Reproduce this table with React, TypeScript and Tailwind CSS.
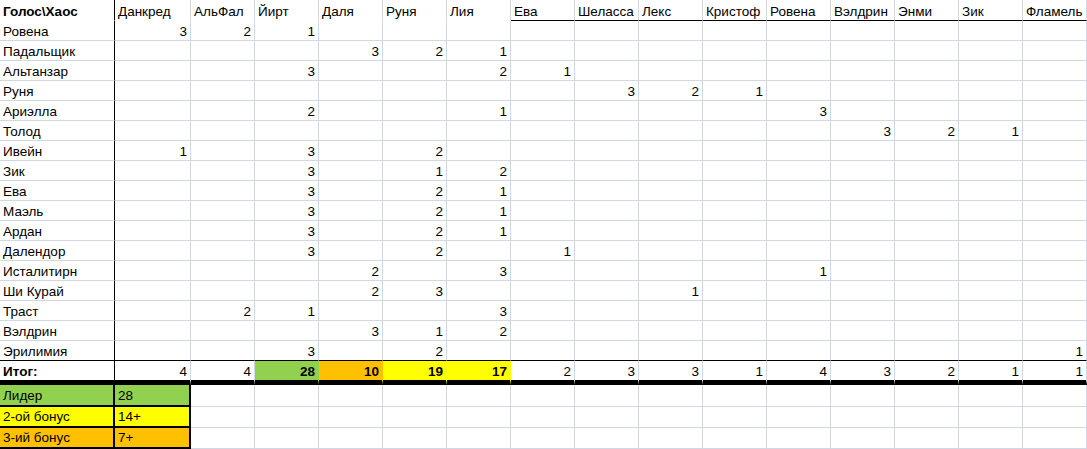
import React from "react";

const cols = [
  "Данкред",
  "АльФал",
  "Йирт",
  "Даля",
  "Руня",
  "Лия",
  "Ева",
  "Шеласса",
  "Лекс",
  "Кристоф",
  "Ровена",
  "Вэлдрин",
  "Энми",
  "Зик",
  "Фламель",
];

const rows: [string, Record<number, number>][] = [
  ["Ровена", { 0: 3, 1: 2, 2: 1 }],
  ["Падальщик", { 3: 3, 4: 2, 5: 1 }],
  ["Альтанзар", { 2: 3, 5: 2, 6: 1 }],
  ["Руня", { 7: 3, 8: 2, 9: 1 }],
  ["Ариэлла", { 2: 2, 5: 1, 10: 3 }],
  ["Толод", { 11: 3, 12: 2, 13: 1 }],
  ["Ивейн", { 0: 1, 2: 3, 4: 2 }],
  ["Зик", { 2: 3, 4: 1, 5: 2 }],
  ["Ева", { 2: 3, 4: 2, 5: 1 }],
  ["Маэль", { 2: 3, 4: 2, 5: 1 }],
  ["Ардан", { 2: 3, 4: 2, 5: 1 }],
  ["Далендор", { 2: 3, 4: 2, 6: 1 }],
  ["Исталитирн", { 3: 2, 5: 3, 10: 1 }],
  ["Ши Курай", { 3: 2, 4: 3, 8: 1 }],
  ["Траст", { 1: 2, 2: 1, 5: 3 }],
  ["Вэлдрин", { 3: 3, 4: 1, 5: 2 }],
  ["Эрилимия", { 2: 3, 4: 2, 14: 1 }],
];

const totals = [4, 4, 28, 10, 19, 17, 2, 3, 3, 1, 4, 3, 2, 1, 1];

const font = { fontFamily: '"Liberation Sans", Arial, sans-serif' };

function w(i: number) {
  return i === 0 ? "w-[76px]" : "w-[64px]";
}

function totalFill(i: number) {
  if (i === 2) return "bg-[#92d050] border-r-[#92d050] font-bold";
  if (i === 3) return "bg-[#ffc000] border-r-[#ffc000] font-bold";
  if (i === 4 || i === 5) return "bg-[#ffff00] border-r-[#ffff00] font-bold";
  return "border-r-[#d0d7e5]";
}

export default function App() {
  return (
    <div className="w-[1087px] h-[449px] overflow-hidden bg-white text-black text-[13.5px] leading-[15px]" style={font}>
      {/* header */}
      <div className="flex h-[21px]">
        <div className="w-[115px] shrink-0 flex items-end pl-[3px] pb-[1px] font-bold border-r border-r-black border-b border-b-white whitespace-nowrap">
          Голос\Хаос
        </div>
        {cols.map((c, i) => (
          <div
            key={c + i}
            className={`${w(i)} shrink-0 flex items-end pl-[3px] pb-[1px] border-r border-r-[#d0d7e5] border-b ${
              i >= 6 ? "border-b-black" : "border-b-white"
            } whitespace-nowrap overflow-hidden`}
          >
            {c}
          </div>
        ))}
      </div>
      {/* data rows */}
      {rows.map(([name, vals], r) => {
        const last = r === rows.length - 1;
        const bb = last ? "border-b-black" : "border-b-[#d0d7e5]";
        return (
          <div key={name + r} className="flex h-[20px]">
            <div className={`w-[115px] shrink-0 flex items-end pl-[3px] pb-[1px] border-r border-r-black border-b ${bb}`}>
              {name}
            </div>
            {cols.map((c, i) => (
              <div
                key={c + i}
                className={`${w(i)} shrink-0 flex items-end justify-end pr-[3px] pb-[1px] border-r border-r-[#d0d7e5] border-b ${bb}`}
              >
                {vals[i] ?? ""}
              </div>
            ))}
          </div>
        );
      })}
      {/* totals */}
      <div className="flex h-[24px]">
        <div className="w-[115px] shrink-0 flex items-end pl-[3px] pb-[1px] font-bold border-r border-r-black border-b-[5px] border-b-black">
          Итог:
        </div>
        {totals.map((t, i) => (
          <div
            key={i}
            className={`${w(i)} shrink-0 flex items-end justify-end pr-[3px] pb-[1px] border-r border-b-[5px] border-b-black ${totalFill(i)}`}
          >
            {t}
          </div>
        ))}
      </div>
      {/* legend */}
      {[
        { label: "Лидер", val: "28", bg: "bg-[#92d050]", h: "h-[22px]" },
        { label: "2-ой бонус", val: "14+", bg: "bg-[#ffff00]", h: "h-[21px]" },
        { label: "3-ий бонус", val: "7+", bg: "bg-[#ffc000]", h: "h-[21px]" },
        { label: "", val: "", bg: "", h: "h-[21px]" },
      ].map((row, r) => (
        <div key={r} className={`flex ${row.h}`}>
          {row.bg ? (
            <>
              <div className={`w-[115px] shrink-0 flex items-end pl-[3px] pb-[2px] ${row.bg} border-r-2 border-r-black border-b-2 border-b-black`}>
                {row.label}
              </div>
              <div className={`w-[76px] shrink-0 flex items-end pl-[3px] pb-[2px] ${row.bg} border-r-2 border-r-black border-b-2 border-b-black`}>
                {row.val}
              </div>
            </>
          ) : (
            <>
              <div className="w-[115px] shrink-0 border-r border-r-[#d0d7e5] border-b border-b-[#d0d7e5]" />
              <div className="w-[76px] shrink-0 border-r border-r-[#d0d7e5] border-b border-b-[#d0d7e5]" />
            </>
          )}
          {cols.slice(1).map((c, i) => (
            <div key={c + i} className="w-[64px] shrink-0 border-r border-r-[#d0d7e5] border-b border-b-[#d0d7e5]" />
          ))}
        </div>
      ))}
    </div>
  );
}
